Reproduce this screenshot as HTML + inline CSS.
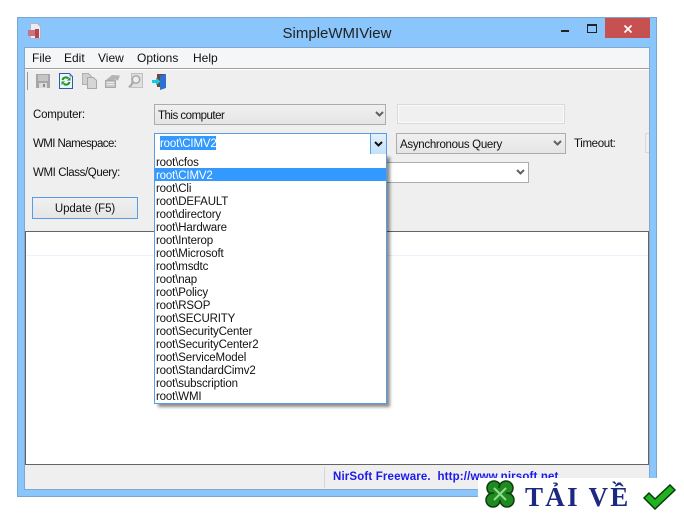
<!DOCTYPE html>
<html>
<head>
<meta charset="utf-8">
<style>
html,body{margin:0;padding:0;background:#fff;}
body{width:684px;height:520px;position:relative;overflow:hidden;font-family:"Liberation Sans",sans-serif;font-size:12px;color:#111;}
.a{position:absolute;}
.t{position:absolute;white-space:nowrap;line-height:14px;}
.l{font-size:11.5px;}
.combo{position:absolute;box-sizing:border-box;border:1px solid #acacac;background:linear-gradient(#f0f0f0,#e5e5e5);}
.ar{position:absolute;}
.li{position:absolute;left:0;width:231px;height:13px;line-height:16px;padding-left:1px;box-sizing:border-box;white-space:nowrap;font-size:11.5px;letter-spacing:-.15px;}
</style>
</head>
<body>
<div class="a" style="left:17px;top:17px;width:640px;height:480px;box-sizing:border-box;background:#8ac5fc;border:1px solid #7ba6cf;"></div>
<div class="a" style="left:24px;top:47px;width:626px;height:443px;box-sizing:border-box;border:1px solid #7fa9d4;background:#efefef;"></div>

<svg class="a" style="left:27px;top:23px" width="15" height="17" viewBox="0 0 15 17"><path d="M3.500.5h7l3 3v12h-10z" fill="#e8edf4" stroke="#a9b6cc"/><rect x="1" y="7" width="9" height="6" fill="#c9737f"/><rect x="8" y="6" width="4" height="9" fill="#b8434f"/></svg>
<div class="t" style="left:17px;width:640px;top:25px;text-align:center;font-size:15px;line-height:17px;color:#222;">SimpleWMIView</div>
<div class="a" style="left:561px;top:30px;width:8px;height:2px;background:#222;"></div>
<div class="a" style="left:587px;top:24px;width:8px;height:6px;border:1px solid #222;border-top:2px solid #222;"></div>
<div class="a" style="left:605px;top:18px;width:45px;height:20px;background:#c75050;"></div>
<svg class="a" style="left:624px;top:25px" width="8" height="8" viewBox="0 0 8 8"><path d="M.5.5l7 7M7.500.5l-7 7" stroke="#fff" stroke-width="1.700"/></svg>

<div class="a" style="left:25px;top:48px;width:624px;height:20px;background:#f5f6f7;"></div>
<div class="a" style="left:25px;top:68px;width:624px;height:1px;background:#a0a0a0;"></div>
<div class="a" style="left:25px;top:69px;width:624px;height:1px;background:#fff;"></div>
<div class="t" style="left:32px;top:51px;">File</div>
<div class="t" style="left:64px;top:51px;">Edit</div>
<div class="t" style="left:98px;top:51px;">View</div>
<div class="t" style="left:137px;top:51px;">Options</div>
<div class="t" style="left:193px;top:51px;">Help</div>

<div class="a" style="left:27px;top:72px;width:1px;height:18px;background:#999;"></div>
<svg class="a" style="left:36px;top:74px" width="14" height="14" viewBox="0 0 14 14"><rect width="14" height="14" fill="#a6a6a6"/><rect x="2" y="1" width="10" height="6" fill="#c4c4c4"/><rect x="3" y="9" width="8" height="5" fill="#dcdcdc"/><rect x="7" y="10" width="2" height="3" fill="#8c8c8c"/></svg>
<svg class="a" style="left:59px;top:73px" width="14" height="16" viewBox="0 0 14 16"><path d="M.5.5h10l3 3v12H.500z" fill="#eef3fb" stroke="#2f5ba8"/><path d="M10.500.5v3h3z" fill="#5b84c8"/><path d="M3.500 7a3.500 3.500 0 0 1 6-1.500M10.500 9a3.500 3.500 0 0 1-6 1.500" fill="none" stroke="#129a22" stroke-width="2"/><path d="M8 7.500h3.500V4zM6 8.500H2.500V12z" fill="#129a22"/></svg>
<svg class="a" style="left:82px;top:73px" width="15" height="16" viewBox="0 0 15 16"><path d="M.5.5h6l3 3v8H.5z" fill="#d0d0d0" stroke="#b0b0b0"/><path d="M5.500 4.500h6l3 3v8h-9z" fill="#d6d6d6" stroke="#a8a8a8"/></svg>
<svg class="a" style="left:105px;top:74px" width="16" height="14" viewBox="0 0 16 14"><path d="M.5 6.500h10v7H.5z" fill="#c8c8c8" stroke="#a8a8a8"/><path d="M1 6l6-5 8 .5-2 5-3-1-1 .5z" fill="#b4b4b4"/><path d="M2 8.500h7M2 10.500h7" stroke="#e8e8e8"/></svg>
<svg class="a" style="left:128px;top:73px" width="15" height="15" viewBox="0 0 15 15"><path d="M3.500.5h11v14h-11z" fill="#e0e0e0" stroke="#c0c0c0"/><circle cx="8" cy="6.500" r="3.700" fill="#eee" stroke="#a8a8a8" stroke-width="1.500"/><path d="M5 9.500l-4 5" stroke="#a8a8a8" stroke-width="2"/></svg>
<svg class="a" style="left:152px;top:73px" width="15" height="17" viewBox="0 0 15 17"><path d="M5 1h8v3H8v10H5z" fill="#6b4a3a"/><path d="M8 3l6-2v14l-6 2z" fill="#2f6fd0"/><path d="M0 7h4V4.500L8.500 8.500 4 12.500V10H0z" fill="#18c8e8"/></svg>

<div class="t l" style="left:33px;top:108px;letter-spacing:-.2px;">Computer:</div>
<div class="combo" style="left:154px;top:104px;width:232px;height:21px;"></div>
<div class="t l" style="left:158px;top:109px;letter-spacing:-.5px;">This computer</div>
<svg class="ar" style="left:375px;top:111px" width="9" height="7" viewBox="0 0 9 7"><path d="M1 1l3.500 3.500L8 1" fill="none" stroke="#606060" stroke-width="2"/></svg>
<div class="a" style="left:397px;top:104px;width:168px;height:20px;box-sizing:border-box;border:1px solid #d9d9d9;background:#f0f0f0;box-shadow:inset 0 0 0 1px #fafafa;"></div>

<div class="t l" style="left:33px;top:137px;letter-spacing:-.57px;">WMI Namespace:</div>
<div class="a" style="left:154px;top:133px;width:233px;height:22px;box-sizing:border-box;border:1px solid #569de5;background:#fff;"></div>
<div class="a" style="left:160px;top:136px;width:56px;height:14px;background:#3399ff;"></div>
<div class="t" style="left:160px;top:137px;color:#fff;font-size:11.5px;letter-spacing:-.15px;">root\CIMV2</div>
<div class="a" style="left:370px;top:134px;width:16px;height:20px;box-sizing:border-box;border-left:1px solid #569de5;background:linear-gradient(#e4f1fb,#c4e1f9);"></div>
<svg class="ar" style="left:374px;top:141px" width="9" height="7" viewBox="0 0 9 7"><path d="M1 1l3.500 3.500L8 1" fill="none" stroke="#111" stroke-width="2"/></svg>

<div class="combo" style="left:396px;top:133px;width:170px;height:21px;"></div>
<div class="t l" style="left:400px;top:138px;letter-spacing:-.3px;">Asynchronous Query</div>
<svg class="ar" style="left:553px;top:140px" width="9" height="7" viewBox="0 0 9 7"><path d="M1 1l3.500 3.500L8 1" fill="none" stroke="#606060" stroke-width="2"/></svg>
<div class="t l" style="left:574px;top:137px;letter-spacing:-.35px;">Timeout:</div>
<div class="a" style="left:645px;top:133px;width:4px;height:20px;box-sizing:border-box;border:1px solid #d9d9d9;border-right:0;background:#f0f0f0;"></div>

<div class="t l" style="left:33px;top:166px;letter-spacing:-.4px;">WMI Class/Query:</div>
<div class="a" style="left:380px;top:162px;width:149px;height:21px;box-sizing:border-box;border:1px solid #acacac;background:#fff;"></div>
<svg class="ar" style="left:516px;top:169px" width="9" height="7" viewBox="0 0 9 7"><path d="M1 1l3.500 3.500L8 1" fill="none" stroke="#606060" stroke-width="2"/></svg>

<div class="a l" style="left:32px;top:197px;width:106px;height:22px;box-sizing:border-box;border:1px solid #569de5;background:linear-gradient(#f0f0f0,#e5e5e5);text-align:center;line-height:22px;letter-spacing:-.1px;">Update (F5)</div>

<div class="a" style="left:25px;top:231px;width:624px;height:234px;box-sizing:border-box;border:1px solid #646464;background:#fff;"></div>
<div class="a" style="left:26px;top:255px;width:622px;height:1px;background:#e9f1fb;"></div>

<div class="a" style="left:25px;top:465px;width:624px;height:24px;background:#efefef;"></div>
<div class="a" style="left:324px;top:467px;width:1px;height:21px;background:#d7d7d7;"></div>
<div class="t" style="left:333px;top:470px;font-size:11.5px;font-weight:bold;color:#1a1aee;letter-spacing:.15px;white-space:pre;">NirSoft Freeware.  http://www.nirsoft.net</div>

<div class="a" style="left:155px;top:154px;width:232px;height:250px;box-shadow:3px 3px 3px rgba(0,0,0,.45);"></div>
<div class="a" style="left:154px;top:154px;width:233px;height:250px;box-sizing:border-box;border:1px solid #569de5;border-top:0;background:#fff;">
<div class="li" style="top:1px;">root\cfos</div>
<div class="li" style="top:14px;background:#3399ff;color:#fff;">root\CIMV2</div>
<div class="li" style="top:27px;">root\Cli</div>
<div class="li" style="top:40px;">root\DEFAULT</div>
<div class="li" style="top:53px;">root\directory</div>
<div class="li" style="top:66px;">root\Hardware</div>
<div class="li" style="top:79px;">root\Interop</div>
<div class="li" style="top:92px;">root\Microsoft</div>
<div class="li" style="top:105px;">root\msdtc</div>
<div class="li" style="top:118px;">root\nap</div>
<div class="li" style="top:131px;">root\Policy</div>
<div class="li" style="top:144px;">root\RSOP</div>
<div class="li" style="top:157px;">root\SECURITY</div>
<div class="li" style="top:170px;">root\SecurityCenter</div>
<div class="li" style="top:183px;">root\SecurityCenter2</div>
<div class="li" style="top:196px;">root\ServiceModel</div>
<div class="li" style="top:209px;">root\StandardCimv2</div>
<div class="li" style="top:222px;">root\subscription</div>
<div class="li" style="top:235px;">root\WMI</div>
</div>

<div class="a" style="left:478px;top:478px;width:206px;height:42px;background:#fff;"></div>
<svg class="a" style="left:484px;top:479px" width="32" height="34" viewBox="0 0 32 34"><g fill="#1f8a1f" stroke="#0c3d0c" stroke-width="1.500"><circle cx="10" cy="9" r="7"/><circle cx="22" cy="9" r="7"/><circle cx="9" cy="21" r="7"/><circle cx="23" cy="21" r="7"/><circle cx="16" cy="15" r="6" stroke="none"/></g><path d="M16 15L10 9M16 15l6-6M16 15l-6 6M16 15l6 6" stroke="#8fdc8f" stroke-width="2"/></svg>
<div class="t" style="left:525px;top:482px;font-family:'Liberation Serif','DejaVu Serif',serif;font-weight:bold;font-size:27px;line-height:30px;color:#1b2a80;letter-spacing:2.3px;">TẢI VỀ</div>
<svg class="a" style="left:643px;top:484px" width="33" height="26" viewBox="0 0 33 26"><path d="M1 14l5-5 6 6L27 1l5 5-20 19z" fill="#1fb41f" stroke="#0b3a0b" stroke-width="1.500"/></svg>
</body>
</html>
